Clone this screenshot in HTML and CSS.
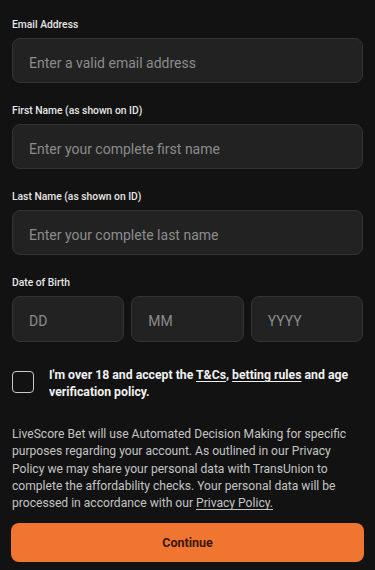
FILE: index.html
```html
<!DOCTYPE html>
<html>
<head>
<meta charset="utf-8">
<link rel="stylesheet" href="styles.css">
</head>
<body>
<div class="page">
  <div class="field">
    <label class="label">Email Address</label>
    <div class="input">Enter a valid email address</div>
  </div>
  <div class="field">
    <label class="label">First Name (as shown on ID)</label>
    <div class="input">Enter your complete first name</div>
  </div>
  <div class="field">
    <label class="label">Last Name (as shown on ID)</label>
    <div class="input">Enter your complete last name</div>
  </div>
  <div class="field">
    <label class="label">Date of Birth</label>
    <div class="dob">
      <div class="input small">DD</div>
      <div class="input small">MM</div>
      <div class="input small">YYYY</div>
    </div>
  </div>
  <div class="agree">
    <div class="checkbox"></div>
    <p class="agree-text">I'm over 18 and accept the <u>T&amp;Cs</u>, <u>betting rules</u> and age<br>verification policy.</p>
  </div>
  <p class="notice">LiveScore Bet will use Automated Decision Making for specific<br>purposes regarding your account. As outlined in our Privacy<br>Policy we may share your personal data with TransUnion to<br>complete the affordability checks. Your personal data will be<br>processed in accordance with our <u>Privacy Policy.</u></p>
  <button class="continue">Continue</button>
</div>
</body>
</html>
```

FILE: styles.css
```css
html, body {
  margin: 0;
  padding: 0;
  background: #121212;
}
body {
  font-family: Roboto, "Liberation Sans", sans-serif;
  color: #e8e8e8;
}
.page {
  padding: 18px 12px 0 12px;
  display: flex;
  flex-direction: column;
}
.field {
  display: flex;
  flex-direction: column;
  margin-bottom: 21px;
}
.label {
  font-size: 10.3px;
  font-weight: 500;
  color: #e6e6e6;
  line-height: 14px;
  margin-bottom: 6px;
}
.input {
  height: 45px;
  box-sizing: border-box;
  background: #222222;
  border: 1px solid #333333;
  border-radius: 8px;
  display: flex;
  align-items: center;
  padding: 4px 0 0 16px;
  font-size: 14px;
  color: #8c8c8c;
}
.dob {
  display: flex;
  gap: 7px;
}
.input.small {
  flex: 1;
  height: 46px;
}
.agree {
  display: flex;
  align-items: flex-start;
  margin-top: 4px;
  gap: 15px;
}
.checkbox {
  width: 22px;
  height: 22px;
  box-sizing: border-box;
  border: 1.5px solid #c8c8c8;
  border-radius: 4px;
  flex: none;
  margin-top: 4px;
}
.agree-text {
  margin: 0;
  font-size: 12.25px;
  font-weight: 700;
  line-height: 17px;
  color: #f0f0f0;
}
.agree-text u {
  text-underline-offset: 2px;
}
.notice {
  margin: 25px 0 0 0;
  font-size: 12.1px;
  line-height: 17.3px;
  color: #c4c4c4;
}
.notice u {
  text-underline-offset: 2px;
}
.continue {
  margin: 11px -1px 0 -1px;
  height: 39px;
  border: none;
  border-radius: 8px;
  background: #ef7530;
  color: #3a1608;
  font-family: inherit;
  font-size: 12.5px;
  font-weight: 700;
}
```
